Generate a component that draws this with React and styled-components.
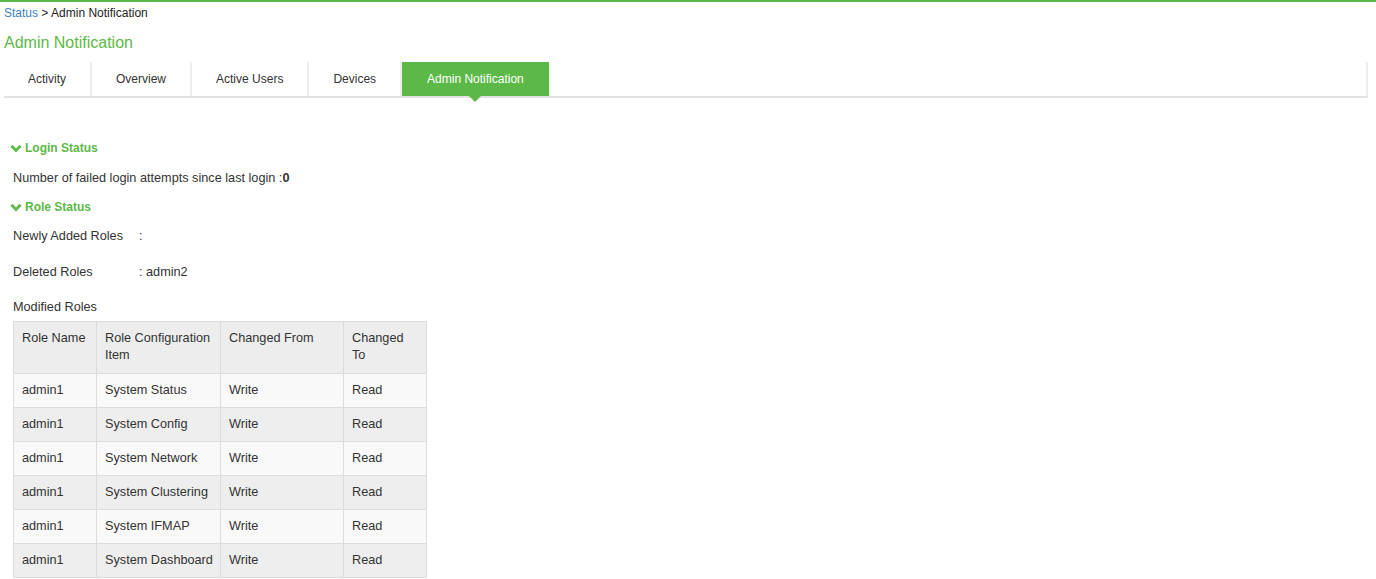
import styled, { createGlobalStyle } from "styled-components";

const GREEN = "#5cb947";

const GlobalStyle = createGlobalStyle`
  html, body {
    margin: 0;
    padding: 0;
    background: #fff;
    font-family: "Liberation Sans", Arial, Helvetica, sans-serif;
    color: #333;
  }
`;

const Page = styled.div`
  border-top: 2px solid ${GREEN};
  padding: 0 8px 0 4px;
`;

const Breadcrumb = styled.div`
  font-size: 12px;
  line-height: 22px;
  color: #222;
  a {
    color: #3a7fc4;
    text-decoration: none;
  }
`;

const Title = styled.h1`
  margin: 9px 0 0;
  font-size: 16px;
  line-height: 20px;
  font-weight: normal;
  color: ${GREEN};
`;

const TabBar = styled.div`
  display: flex;
  margin-top: 9px;
  height: 34px;
  border-bottom: 2px solid #e2e2e2;
  border-right: 2px solid #ececec;
`;

const Tab = styled.div`
  position: relative;
  display: flex;
  align-items: center;
  padding: 0 ${({ $active }) => ($active ? 25 : 24)}px;
  font-size: 12px;
  color: ${({ $active }) => ($active ? "#fff" : "#333")};
  background: ${({ $active }) => ($active ? GREEN : "#fff")};
  border-right: ${({ $active }) => ($active ? "none" : "2px solid #ededed")};
  ${({ $active }) =>
    $active &&
    `
    &::after {
      content: "";
      position: absolute;
      left: 50%;
      bottom: -6px;
      margin-left: -6px;
      border-left: 6px solid transparent;
      border-right: 6px solid transparent;
      border-top: 6px solid ${GREEN};
    }
  `}
`;

const Content = styled.div`
  padding: 41px 0 0 6px;
`;

const SectionHeader = styled.div`
  display: flex;
  align-items: center;
  gap: 3px;
  font-size: 12px;
  font-weight: bold;
  line-height: 18px;
  color: ${GREEN};
`;

const SectionBody = styled.div`
  padding-left: 3px;
  font-size: 12.7px;
  line-height: 17px;
`;

const Line = styled.div`
  margin: ${({ $mt }) => $mt || 0}px 0 ${({ $mb }) => $mb || 0}px;
  b {
    font-weight: bold;
  }
`;

const KeyValue = styled.div`
  display: flex;
  margin: ${({ $mt }) => $mt || 0}px 0 ${({ $mb }) => $mb || 0}px;
`;

const Key = styled.span`
  width: 126px;
`;

const Table = styled.table`
  margin-top: 5px;
  border-collapse: collapse;
  table-layout: fixed;
  width: 413px;
  font-size: 12.7px;
  line-height: 17px;
  th,
  td {
    border: 1px solid #dcdcdc;
    padding: 8px;
    text-align: left;
    vertical-align: top;
  }
  td {
    white-space: nowrap;
  }
  th {
    padding-bottom: 9px;
    font-weight: normal;
    background: #ededed;
  }
  tbody tr:nth-child(odd) td {
    background: #f9f9f9;
  }
  tbody tr:nth-child(even) td {
    background: #eeeeee;
  }
`;

const Chevron = () => (
  <svg width="12" height="9" viewBox="0 0 12 9">
    <path d="M1.4 1.8 L6 6.4 L10.6 1.8" fill="none" stroke={GREEN} strokeWidth="2.8" />
  </svg>
);

const tabs = ["Activity", "Overview", "Active Users", "Devices", "Admin Notification"];

const rows = [
  ["admin1", "System Status", "Write", "Read"],
  ["admin1", "System Config", "Write", "Read"],
  ["admin1", "System Network", "Write", "Read"],
  ["admin1", "System Clustering", "Write", "Read"],
  ["admin1", "System IFMAP", "Write", "Read"],
  ["admin1", "System Dashboard", "Write", "Read"],
];

export default function App() {
  return (
    <>
      <GlobalStyle />
      <Page>
        <Breadcrumb>
          <a href="#">Status</a> &gt; Admin Notification
        </Breadcrumb>
        <Title>Admin Notification</Title>
        <TabBar>
          {tabs.map((t) => (
            <Tab key={t} $active={t === "Admin Notification"}>
              {t}
            </Tab>
          ))}
        </TabBar>
        <Content>
          <SectionHeader>
            <Chevron />
            Login Status
          </SectionHeader>
          <SectionBody>
            <Line $mt={13} $mb={11}>
              Number of failed login attempts since last login :<b>0</b>
            </Line>
          </SectionBody>
          <SectionHeader>
            <Chevron />
            Role Status
          </SectionHeader>
          <SectionBody>
            <KeyValue $mt={12} $mb={19}>
              <Key>Newly Added Roles</Key>
              <span>:</span>
            </KeyValue>
            <KeyValue $mb={18}>
              <Key>Deleted Roles</Key>
              <span>: admin2</span>
            </KeyValue>
            <Line>Modified Roles</Line>
            <Table>
              <colgroup>
                <col style={{ width: 83 }} />
                <col style={{ width: 124 }} />
                <col style={{ width: 123 }} />
                <col style={{ width: 83 }} />
              </colgroup>
              <thead>
                <tr>
                  <th>Role Name</th>
                  <th>Role Configuration Item</th>
                  <th>Changed From</th>
                  <th>Changed To</th>
                </tr>
              </thead>
              <tbody>
                {rows.map((r, i) => (
                  <tr key={i}>
                    {r.map((c, j) => (
                      <td key={j}>{c}</td>
                    ))}
                  </tr>
                ))}
              </tbody>
            </Table>
          </SectionBody>
        </Content>
      </Page>
    </>
  );
}
